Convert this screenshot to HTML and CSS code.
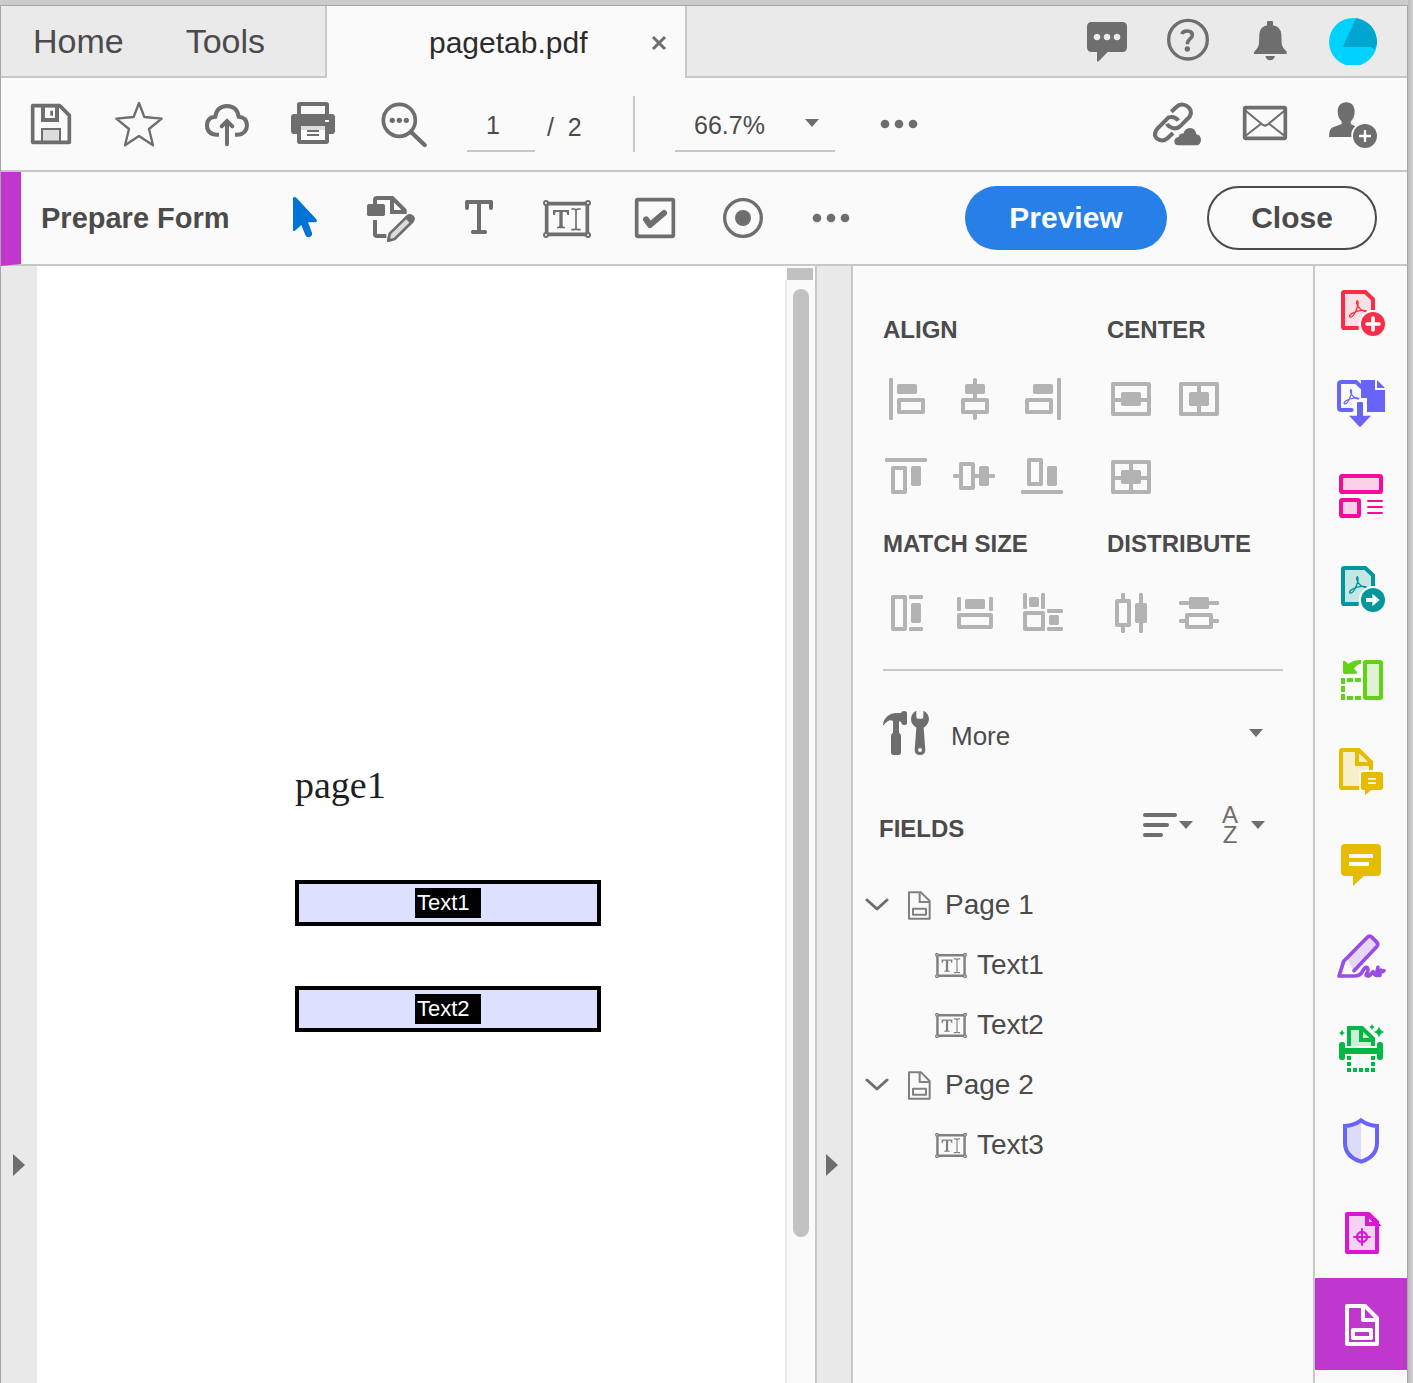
FILE: index.html
```html
<!DOCTYPE html>
<html lang="en">
<head>
<meta charset="utf-8">
<meta name="viewport" content="width=device-width, initial-scale=1">
<title>pagetab.pdf</title>
<link rel="stylesheet" href="styles.css">
</head>
<body>
<div class="window">
  <header class="tabs">
    <nav class="tabs-nav">
      <a href="#home">Home</a>
      <a href="#tools">Tools</a>
    </nav>
    <div class="tab-active">
      <span class="tab-name">pagetab.pdf</span>
      <button class="tab-close" aria-label="Close tab"><svg width="16" height="16" viewBox="0 0 16 16"><path d="M2 2 14 14M14 2 2 14" fill="none" stroke="currentColor" stroke-width="3"/></svg></button>
    </div>
    <div class="tabs-tools">
      <button class="icon" aria-label="Messages"><svg viewBox="549 51 144 144"><path fill="currentColor" fill-rule="evenodd" d="M575 66H667Q681 66 681 80V142Q681 156 667 156H623L597 183Q591 188 591 181V156H575Q561 156 561 142V80Q561 66 575 66ZM591 101a10 10 0 1 0 .1 0ZM621 101a10 10 0 1 0 .1 0ZM651 101a10 10 0 1 0 .1 0Z"/></svg></button>
      <button class="icon" aria-label="Help"><svg viewBox="795 51 144 144"><g fill="none" stroke="currentColor"><circle cx="864" cy="119" r="58" stroke-width="10"/><path stroke-width="11" d="M846 102Q848 93 862 93 877 93 877 106 877 112 868 119 862 124 862 133"/></g><circle cx="862" cy="147" r="8" fill="currentColor"/></svg></button>
      <button class="icon" aria-label="Notifications"><svg viewBox="1041 51 144 144"><path fill="currentColor" d="M1101 66Q1101 63 1104 63H1116Q1119 63 1119 66V76Q1141 80 1144 102L1145 130Q1147 145 1158 152 1161 155 1160 162H1062Q1061 155 1065 152 1075 145 1077 130L1078 102Q1081 80 1101 76ZM1096 168H1125Q1121 181 1110 181 1100 181 1096 168Z"/></svg></button>
      <button class="icon" aria-label="Account"><svg viewBox="1287 51 144 144"><circle cx="1359" cy="126" r="72" fill="#00d2ff"/><path fill="#00a6d0" d="M1368 54Q1424 66 1431 122V132L1423 150 1414 141H1328Z"/></svg></button>
    </div>
  </header>

  <div class="toolbar">
    <button class="icon" aria-label="Save"><svg viewBox="81 300 144 144"><path fill="#dcdcdc" d="M127 387h54v36h-54z"/><path fill="none" stroke="currentColor" stroke-width="11" stroke-linejoin="round" d="M98 317H179L208 346V427H98Z"/><path fill="currentColor" fill-rule="evenodd" d="M123 317H177V366H123ZM135 322V354H165V322ZM151 332h8v15h-8zM123 384H183V426H177V390H129V426H123Z"/></svg></button>
    <button class="icon" aria-label="Star"><svg viewBox="345 300 144 144"><path fill="none" stroke="currentColor" stroke-width="7" stroke-linejoin="round" d="M417 309 433 351 485 356 447 387 459 436 417 408 375 436 387 387 349 356 401 351Z"/></svg></button>
    <button class="icon" aria-label="Upload to cloud"><svg viewBox="609 300 144 144"><g fill="none" stroke="currentColor" stroke-width="12" stroke-linecap="round"><path stroke-linecap="butt" d="M657 404H648Q621 402 621 375 622 351 646 350 650 319 681 318 712 319 716 350 740 352 741 375 740 402 714 404H705"/><path d="M681 433V366M665 379 681 363 697 379"/></g></svg></button>
    <button class="icon" aria-label="Print"><svg viewBox="873 300 144 144"><g fill="currentColor"><path fill-rule="evenodd" d="M899 306H979Q987 306 987 314V342H891V314Q891 306 899 306ZM903 318V342H975V318Z"/><path fill-rule="evenodd" d="M883 342H995Q1005 342 1005 352V392Q1005 402 995 402H987V424Q987 432 979 432H899Q891 432 891 424V402H883Q873 402 873 392V352Q873 342 883 342ZM903 378V420H975V378ZM975 360V366H987V360Z"/></g><path fill="#dcdcdc" d="M903 378h72v12h-72z"/><path d="M921 393H957M921 405H957" stroke="currentColor" stroke-width="6"/></svg></button>
    <button class="icon" aria-label="Search"><svg viewBox="1137 300 144 144"><g fill="none" stroke="currentColor"><circle cx="1198" cy="361" r="48" stroke-width="11"/><path stroke-width="13" d="M1233 396 1274 435" stroke-linecap="round"/></g><g fill="currentColor"><circle cx="1177" cy="361" r="8"/><circle cx="1198" cy="361" r="8"/><circle cx="1219" cy="361" r="8"/></g></svg></button>
    <div class="pager">
      <input class="page-input" type="text" value="1" aria-label="Page number">
      <span class="page-total">/&nbsp; 2</span>
    </div>
    <span class="divider"></span>
    <div class="zoom">
      <select aria-label="Zoom level"><option>66.7%</option></select>
      <svg class="caret" viewBox="0 0 14 8"><path d="M0 0h14L7 8z" fill="currentColor"/></svg>
    </div>
    <button class="icon" aria-label="More tools"><svg viewBox="1425 300 144 144"><g fill="currentColor"><circle cx="1455" cy="372" r="13"/><circle cx="1497" cy="372" r="13"/><circle cx="1539" cy="372" r="13"/></g></svg></button>
    <span class="spring"></span>
    <button class="icon" aria-label="Share link"><svg viewBox="759 300 144 144"><g fill="none" stroke="currentColor" stroke-width="12"><path d="M814 335 829 321Q842 308 859 317 880 330 869 350L840 379Q825 391 809 380 803 376 801 371"/><path d="M835 362Q825 347 806 352L773 385Q758 403 771 416 787 427 801 416L819 399"/></g><path fill="currentColor" d="M835 436Q823 436 823 424 824 412 836 411 838 400 851 400 854 385 870 384 887 385 889 403 903 405 903 421 902 436 888 436Z"/></svg></button>
    <button class="icon" aria-label="Email"><svg viewBox="1023 300 144 144"><g fill="none" stroke="currentColor"><rect x="1034" y="323" width="122" height="92" rx="3" stroke-width="11"/><path stroke-width="6" d="M1037 332 1086 373Q1095 381 1104 373L1153 332M1037 407 1083 371M1153 407 1107 371"/></g></svg></button>
    <button class="icon" aria-label="Add person"><svg viewBox="1287 300 144 144"><path fill="currentColor" d="M1339 307C1355 307 1364 318 1364 335 1364 349 1358 358 1352 365V372L1366 379Q1352 390 1354 411H1287Q1287 386 1299 382L1325 372V365C1319 358 1313 349 1313 335 1313 318 1322 307 1339 307Z"/><circle cx="1395" cy="408" r="36" fill="currentColor"/><path d="M1395 390V426M1377 408H1413" stroke="#fff" stroke-width="7"/></svg></button>
  </div>

  <div class="toolbar toolbar-form">
    <h1 class="tool-title">Prepare Form</h1>
    <button class="icon selected" aria-label="Select"><svg viewBox="837 582 144 144"><path fill="currentColor" d="M879 594Q882 588 889 593L949 658Q954 667 945 667H924L936 698Q938 707 929 711 920 714 916 705L904 675 885 692Q879 696 879 689Z"/></svg></button>
    <button class="icon" aria-label="Edit form"><svg viewBox="1101 582 144 144"><g fill="none" stroke="currentColor" stroke-width="12"><path d="M1125 612V600Q1125 594 1131 594H1177L1214 631V636H1176V600M1125 660V703Q1125 708 1131 708H1159"/></g><rect x="1101" y="612" width="54" height="36" rx="5" fill="currentColor"/><path fill="#dcdcdc" stroke="currentColor" stroke-width="8" stroke-linejoin="round" d="M1165 722 1169 701 1221 650Q1230 643 1238 650 1244 657 1236 666L1184 717Z"/><path fill="currentColor" d="M1221 650Q1230 643 1238 650 1244 657 1236 666L1231 671 1216 655ZM1163 708 1178 722 1162 725Z"/></svg></button>
    <button class="icon" aria-label="Add text"><svg viewBox="165 582 144 144"><path fill="currentColor" d="M200 600H274Q279 600 279 605V625Q279 630 273 630 267 630 267 625V612H243V690H257Q261 690 261 696 261 702 257 702H217Q213 702 213 696 213 690 217 690H231V612H207V625Q207 630 201 630 195 630 195 625V605Q195 600 200 600Z"/></svg></button>
    <button class="icon" aria-label="Text field"><svg viewBox="429 582 144 144"><use href="#textfield"/></svg></button>
    <button class="icon" aria-label="Check box"><svg viewBox="693 582 144 144"><g fill="none" stroke="currentColor"><rect x="710" y="599" width="110" height="110" rx="4" stroke-width="11"/><path stroke-width="18" stroke-linecap="round" stroke-linejoin="round" d="M738 658 750 675 792 639"/></g></svg></button>
    <button class="icon" aria-label="Radio button"><svg viewBox="957 582 144 144"><circle cx="1029" cy="654" r="55" fill="none" stroke="currentColor" stroke-width="10"/><circle cx="1029" cy="654" r="24" fill="currentColor"/></svg></button>
    <button class="icon" aria-label="More fields"><svg viewBox="1221 582 144 144"><g fill="currentColor"><circle cx="1251" cy="654" r="13"/><circle cx="1293" cy="654" r="13"/><circle cx="1335" cy="654" r="13"/></g></svg></button>
    <span class="spring"></span>
    <button class="pill pill-primary">Preview</button>
    <button class="pill pill-outline">Close</button>
  </div>

  <main class="work">
    <button class="strip" aria-label="Show left panel"><svg viewBox="0 0 12 22"><path d="M0 0 12 11 0 22z" fill="currentColor"/></svg></button>
    <section class="document">
      <p class="doc-text">page1</p>
      <button class="field"><span>Text1</span></button>
      <button class="field"><span>Text2</span></button>
    </section>
    <div class="scroll">
      <span class="scroll-cap"></span>
      <div class="scroll-track"><span class="scroll-thumb"></span></div>
    </div>
    <button class="strip strip-right" aria-label="Hide right panel"><svg viewBox="0 0 12 22"><path d="M0 0 12 11 0 22z" fill="currentColor"/></svg></button>

    <aside class="panel">
      <div class="groups">
        <section>
          <h2>ALIGN</h2>
          <div class="group-icons three">
            <button class="icon" aria-label="Align left"><svg viewBox="69 225 144 144"><g fill="currentColor"><rect x="87" y="234" width="12" height="126" rx="4"/><rect x="111" y="252" width="60" height="30" rx="5"/></g><rect class="o" x="117" y="300" width="72" height="36"/></svg></button>
            <button class="icon" aria-label="Align vertical centers"><svg viewBox="273 225 144 144"><g fill="currentColor"><path d="M339 237q6-6 12 0V300h-12zM339 336h12v21q-6 6-12 0z"/><rect x="315" y="252" width="60" height="30" rx="5"/></g><rect class="o" x="309" y="300" width="72" height="36"/></svg></button>
            <button class="icon" aria-label="Align right"><svg viewBox="477 225 144 144"><g fill="currentColor"><rect x="591" y="234" width="12" height="126" rx="4"/><rect x="519" y="252" width="60" height="30" rx="5"/></g><rect class="o" x="501" y="300" width="72" height="36"/></svg></button>
            <button class="icon" aria-label="Align top"><svg viewBox="69 459 144 144"><g fill="currentColor"><rect x="75" y="474" width="126" height="12" rx="4"/><rect x="153" y="498" width="30" height="60" rx="5"/></g><rect class="o" x="99" y="504" width="36" height="72"/></svg></button>
            <button class="icon" aria-label="Align horizontal centers"><svg viewBox="273 459 144 144"><g fill="currentColor"><rect x="279" y="522" width="20" height="12" rx="4"/><rect x="342" y="522" width="63" height="12" rx="4"/><rect x="357" y="498" width="30" height="60" rx="5"/></g><rect class="o" x="303" y="492" width="36" height="72"/></svg></button>
            <button class="icon" aria-label="Align bottom"><svg viewBox="477 459 144 144"><g fill="currentColor"><rect x="483" y="570" width="126" height="12" rx="4"/><rect x="561" y="498" width="30" height="60" rx="5"/></g><rect class="o" x="507" y="480" width="36" height="72"/></svg></button>
          </div>
        </section>
        <section>
          <h2>CENTER</h2>
          <div class="group-icons two">
            <button class="icon" aria-label="Center vertically"><svg viewBox="741 225 144 144"><rect class="o" x="759" y="252" width="108" height="90"/><path fill="currentColor" d="M762 294h102v12H762z"/><rect x="783" y="276" width="60" height="42" rx="5" fill="currentColor"/></svg></button>
            <button class="icon" aria-label="Center horizontally"><svg viewBox="945 225 144 144"><rect class="o" x="963" y="252" width="108" height="90"/><path fill="currentColor" d="M1011 255h12v84h-12z"/><rect x="987" y="276" width="60" height="42" rx="5" fill="currentColor"/></svg></button>
            <button class="icon" aria-label="Center both"><svg viewBox="741 459 144 144"><rect class="o" x="759" y="486" width="108" height="90"/><path fill="currentColor" d="M762 528h102v12H762zM807 489h12v84h-12z"/><rect x="783" y="510" width="60" height="42" rx="5" fill="currentColor"/></svg></button>
          </div>
        </section>
        <section>
          <h2>MATCH SIZE</h2>
          <div class="group-icons three">
            <button class="icon" aria-label="Match height"><svg viewBox="69 204 144 144"><rect class="o" x="99" y="228" width="36" height="96"/><g fill="currentColor"><rect x="147" y="222" width="42" height="12" rx="4"/><rect x="147" y="318" width="42" height="12" rx="4"/><rect x="153" y="246" width="30" height="60" rx="5"/></g></svg></button>
            <button class="icon" aria-label="Match width"><svg viewBox="273 204 144 144"><rect class="o" x="297" y="282" width="96" height="36"/><g fill="currentColor"><rect x="291" y="228" width="12" height="42" rx="4"/><rect x="387" y="228" width="12" height="42" rx="4"/><rect x="315" y="234" width="60" height="30" rx="5"/></g></svg></button>
            <button class="icon" aria-label="Match both"><svg viewBox="477 204 144 144"><rect class="o" x="495" y="276" width="54" height="48"/><g fill="currentColor"><rect x="489" y="216" width="12" height="48" rx="4"/><rect x="543" y="216" width="12" height="48" rx="4"/><rect x="507" y="228" width="30" height="30" rx="5"/><rect x="561" y="264" width="48" height="12" rx="4"/><rect x="561" y="318" width="48" height="12" rx="4"/><rect x="567" y="282" width="30" height="30" rx="5"/></g></svg></button>
          </div>
        </section>
        <section>
          <h2>DISTRIBUTE</h2>
          <div class="group-icons two">
            <button class="icon" aria-label="Distribute horizontally"><svg viewBox="741 204 144 144"><rect class="o" x="771" y="240" width="36" height="72"/><g fill="currentColor"><rect x="783" y="216" width="12" height="24" rx="4"/><rect x="783" y="312" width="12" height="24" rx="4"/><rect x="837" y="216" width="12" height="120" rx="4"/><rect x="825" y="246" width="36" height="60" rx="5"/></g></svg></button>
            <button class="icon" aria-label="Distribute vertically"><svg viewBox="945 204 144 144"><rect class="o" x="981" y="282" width="72" height="36"/><g fill="currentColor"><rect x="957" y="240" width="120" height="12" rx="4"/><rect x="987" y="228" width="60" height="36" rx="5"/><rect x="957" y="294" width="24" height="12" rx="4"/><rect x="1053" y="294" width="24" height="12" rx="4"/></g></svg></button>
          </div>
        </section>
      </div>

      <button class="more">
        <svg class="more-icon" viewBox="69 564 144 144"><g fill="currentColor"><path d="M69 611Q70 595 84 584 94 576 106 576H123Q125 570 132 570 141 570 141 576V606Q141 612 132 612 125 612 123 603L117 600V635Q123 637 123 645V694Q123 702 115 702H101Q93 702 93 694V645Q93 637 99 635V600Q88 592 69 614Z"/><path fill-rule="evenodd" d="M169 569V588Q169 593 174 593H185Q190 593 190 588V569Q207 577 207 594 206 610 191 620L196 686Q196 702 180 702 164 702 164 686L169 620Q153 610 153 594 153 577 169 569ZM180 681a6 6 0 1 0 .1 0Z"/></g></svg>
        <span>More</span>
        <svg class="caret" viewBox="0 0 14 8"><path d="M0 0h14L7 8z" fill="currentColor"/></svg>
      </button>

      <div class="fields-head">
        <h2>FIELDS</h2>
        <button class="sort" aria-label="Order fields"><svg class="lines" viewBox="0 0 34 24"><path d="M2 2H32M2 12H24M2 22H18" stroke="currentColor" stroke-width="4" stroke-linecap="round"/></svg><svg class="caret" viewBox="0 0 14 8"><path d="M0 0h14L7 8z" fill="currentColor"/></svg></button>
        <button class="sort sort-az"><span class="az"><span>A</span><span>Z</span></span><svg class="caret" viewBox="0 0 14 8"><path d="M0 0h14L7 8z" fill="currentColor"/></svg></button>
      </div>

      <ul class="tree">
        <li class="tree-page"><svg class="chev" viewBox="0 0 24 14"><path d="M2 2 12 11 22 2" fill="none" stroke="currentColor" stroke-width="3" stroke-linecap="round" stroke-linejoin="round"/></svg><svg class="page-icon" viewBox="171 321 72 93"><use href="#pageform"/></svg><span>Page 1</span></li>
        <li class="tree-field"><svg class="field-icon" viewBox="429 597 144 120"><use href="#textfield"/></svg><span>Text1</span></li>
        <li class="tree-field"><svg class="field-icon" viewBox="429 597 144 120"><use href="#textfield"/></svg><span>Text2</span></li>
        <li class="tree-page"><svg class="chev" viewBox="0 0 24 14"><path d="M2 2 12 11 22 2" fill="none" stroke="currentColor" stroke-width="3" stroke-linecap="round" stroke-linejoin="round"/></svg><svg class="page-icon" viewBox="171 321 72 93"><use href="#pageform"/></svg><span>Page 2</span></li>
        <li class="tree-field"><svg class="field-icon" viewBox="429 597 144 120"><use href="#textfield"/></svg><span>Text3</span></li>
      </ul>
    </aside>

    <nav class="rail" aria-label="Tools">
      <button aria-label="Create PDF" class="red"><svg viewBox="45 -12 276 276"><path d="M133 66H196L219 86V130Q184 132 182 174H133Q129 174 129 170V70Q129 66 133 66Z" fill="#fde0e3"/><path d="M219 122V88L196 66H133Q129 66 129 70V170Q129 174 133 174H176" fill="none" stroke="currentColor" stroke-width="12"/><use href="#acro"/><circle cx="219" cy="162" r="42" fill="#fafafa"/><circle cx="219" cy="162" r="36" fill="currentColor"/><path d="M219 144V180M201 162H237" stroke="#fff" stroke-width="11" stroke-linecap="round"/></svg></button>
      <button aria-label="Combine files" class="violet"><svg viewBox="45 264 276 276"><path d="M155 420H124Q117 420 117 413V343Q117 336 124 336H168L188 354" fill="none" stroke="currentColor" stroke-width="12" stroke-linecap="round"/><path fill="currentColor" d="M183 330H225V360H255V426H201V384H183ZM231 330 255 354H231ZM174 396H186Q189 396 189 400V437H213L183 469Q180 473 177 469L147 437H171V400Q171 396 174 396Z"/><g transform="translate(-3 281) scale(.88)"><use href="#acro" transform="translate(5 -4)"/></g></svg></button>
      <button aria-label="Organize pages" class="pink"><svg viewBox="45 540 276 276"><g fill="#fbd0e8" stroke="currentColor" stroke-width="12"><rect x="123" y="618" width="120" height="48" rx="4"/><rect x="123" y="690" width="54" height="48" rx="4"/></g><path d="M204 693H246M204 711H246M204 729H246" stroke="currentColor" stroke-width="6" stroke-linecap="round"/></svg></button>
      <button aria-label="Export PDF" class="teal"><svg viewBox="45 816 276 276"><path d="M133 894H196L219 914V960Q184 962 182 1002H133Q129 1002 129 998V898Q129 894 133 894Z" fill="#c6e6e6"/><path d="M219 950V916L196 894H133Q129 894 129 898V998Q129 1002 133 1002H176" fill="none" stroke="currentColor" stroke-width="12"/><g transform="translate(0 828)"><use href="#acro"/></g><circle cx="219" cy="990" r="42" fill="#fafafa"/><circle cx="219" cy="990" r="36" fill="currentColor"/><path d="M198 984H217V971L239 990 217 1009V996H198Z" fill="#fff"/></svg></button>
      <button aria-label="Rotate pages" class="lime"><svg viewBox="45 12 276 276"><rect x="195" y="96" width="48" height="108" rx="3" fill="#e0f2d4" stroke="currentColor" stroke-width="12"/><path fill="currentColor" d="M183 90V101Q169 103 162 117L172 127Q173 131 168 131L133 132Q129 131 129 127V94Q132 90 136 94L145 102Q160 90 183 90Z"/><path fill="none" stroke="currentColor" stroke-width="12" d="M123 150H135M141 150H159M165 150H183M129 144V162M129 168V186M129 192V210M135 204H135M141 204H159M165 204H183"/></svg></button>
      <button aria-label="Comment on page" class="gold"><svg viewBox="45 288 276 276"><path d="M123 360H174L213 398V420H178V474H123Z" fill="#f6efca"/><path d="M177 474H127Q123 474 123 470V364Q123 360 127 360H176L213 396V420M171 360V402H213" fill="none" stroke="currentColor" stroke-width="12"/><path fill="currentColor" fill-rule="evenodd" d="M190 426H242Q249 426 249 433V473Q249 480 242 480H214L195 496V480H190Q183 480 183 473V433Q183 426 190 426ZM204 444V449H228V444ZM204 457V462H228V457Z"/></svg></button>
      <button aria-label="Comment" class="gold"><svg viewBox="45 564 276 276"><path fill="currentColor" fill-rule="evenodd" d="M135 642H231Q243 642 243 654V726Q243 738 231 738H192L159 768V738H135Q123 738 123 726V654Q123 642 135 642ZM147 672V684H219V672ZM147 696V708H207V696Z"/></svg></button>
      <button aria-label="Fill and sign" class="purple"><svg viewBox="45 840 276 276"><path fill="#e6d6f7" d="M142 986 205 920 230 941 160 1022Z"/><path d="M117 1038 131 994 202 922Q209 915 216 922L231 937Q236 943 230 950L162 1022M117 1038H165Q182 1037 188 1023 196 1010 202 1013 207 1019 199 1033 197 1039 208 1037L219 1025Q223 1037 234 1036 241 1033 243 1020 246 1029 252 1022M234 1012Q226 1035 240 1036" fill="none" stroke="currentColor" stroke-width="11" stroke-linejoin="round" stroke-linecap="round"/></svg></button>
      <button aria-label="Scan and OCR" class="green"><svg viewBox="45 36 276 276"><path d="M147 168V114H184L219 148V168Z" fill="#cdeed8"/><path d="M147 168V114H186L219 146V168M183 114V150H219" fill="none" stroke="currentColor" stroke-width="12"/><path fill="currentColor" d="M125 156H129Q135 156 135 162V174H231V162Q231 156 237 156H241Q249 156 249 164V202Q249 210 241 210H237Q231 210 231 204V192H135V204Q135 210 129 210H125Q117 210 117 202V164Q117 156 125 156ZM237 108Q239 123 254 126 239 129 237 144 235 129 220 126 235 123 237 108ZM216 102 219 108 225 111 219 114 216 120 213 114 207 111 213 108ZM126 119 129 126 135 129 129 132 126 138 122 132 117 129 122 126Z"/><path stroke="currentColor" stroke-width="12" stroke-dasharray="12 6" fill="none" d="M147 198V246M219 198V246M159 240H213"/></svg></button>
      <button aria-label="Protect" class="violet"><svg viewBox="45 312 276 276"><path fill="#dcdcfa" d="M183 391V515Q135 500 135 460V408Q165 407 183 391Z"/><path fill="none" stroke="currentColor" stroke-width="12" d="M183 391Q205 407 231 408V460Q230 500 183 515 136 500 135 460V408Q161 407 183 391Z"/></svg></button>
      <button aria-label="Optimize PDF" class="magenta"><svg viewBox="45 588 276 276"><path fill="#f6d2f5" stroke="currentColor" stroke-width="12" stroke-linejoin="round" d="M141 672H206L231 696V786H141Z"/><path fill="#fafafa" stroke="currentColor" stroke-width="12" d="M201 672V702H231L204 674"/><g fill="none" stroke="currentColor"><circle cx="186" cy="741" r="15" stroke-width="7"/><path stroke-width="6" d="M186 715V767M160 741H212"/></g></svg></button>
      <button aria-label="Prepare form" class="active"><svg viewBox="45 864 276 276"><g fill="none" stroke="currentColor" stroke-width="12" stroke-linejoin="round"><path d="M141 948H195L231 984V1062H141Z"/><path d="M189 948V990H231M159 1020H213V1044H159Z"/></g></svg></button>
    </nav>
  </main>
</div>

<div class="backdrop" aria-hidden="true"></div>

<svg class="defs" width="0" height="0" aria-hidden="true">
  <defs>
    <g id="textfield">
      <path fill="none" stroke="currentColor" stroke-width="11" d="M440 611H562V703H440Z"/>
      <g fill="#fafafa" stroke="currentColor" stroke-width="6"><circle cx="438" cy="609" r="6"/><circle cx="564" cy="609" r="6"/><circle cx="438" cy="705" r="6"/><circle cx="564" cy="705" r="6"/></g>
      <path fill="currentColor" d="M459 630H507V645H502L499 636H488V679L495 681V685H471V681L478 679V636H467L464 645H459Z"/>
      <path fill="none" stroke="currentColor" stroke-width="5" d="M514 627H522Q528 627 528 632 528 627 534 627H542M528 630V685M514 689H522Q528 689 528 684 528 689 534 689H542"/>
    </g>
    <g id="pageform" fill="none" stroke="currentColor" stroke-width="6" stroke-linejoin="round">
      <path d="M177 328H213L239 354V407H177Z"/><path d="M209 328V357H239M189 377H228V395H189Z"/>
    </g>
    <path id="acro" fill="none" stroke="currentColor" stroke-width="4" d="M172 92C166 99 175 112 181 117 188 123 197 126 199 123 197 119 175 121 162 127 152 131 146 138 150 141 156 143 164 131 169 119 174 107 177 96 172 92Z"/>
  </defs>
</svg>
</body>
</html>
```

FILE: styles.css
```css
* {
  box-sizing: border-box;
}

body {
  margin: 0;
  min-height: 100vh;
  display: flex;
  overflow: hidden;
  background: #cbcbcb;
  color: #4b4b4b;
  font-family: "Liberation Sans", Arial, sans-serif;
}

button,
input,
select {
  margin: 0;
  padding: 0;
  border: 0;
  background: none;
  color: inherit;
  font: inherit;
}

svg {
  display: block;
  flex: none;
}

h1,
h2,
p,
ul {
  margin: 0;
  padding: 0;
  list-style: none;
}

h2 {
  font-size: 24px;
  line-height: 28px;
}

.defs {
  position: absolute;
}

.window {
  flex: 1;
  min-width: 0;
  margin-top: 5px;
  border: 1px solid #a6a6a6;
  border-bottom: 0;
  background: #fafafa;
  display: flex;
  flex-direction: column;
}

.backdrop {
  flex: none;
  width: 5px;
  background: linear-gradient(90deg, #bcbcbc, #d0d0d0);
}

.icon {
  flex: none;
  width: 48px;
  height: 48px;
  color: #6e6e6e;
}

.icon svg {
  width: 48px;
  height: 48px;
}

.caret {
  width: 14px;
  height: 8px;
  color: #6e6e6e;
}

.spring {
  flex: 1;
}

/* Tab strip */

.tabs {
  display: flex;
  height: 72px;
  background: #eaeaea;
}

.tabs-nav {
  display: flex;
  gap: 62px;
  width: 326px;
  padding-left: 32px;
  border-right: 2px solid #c8c8c8;
  border-bottom: 2px solid #c8c8c8;
  font-size: 34px;
  line-height: 70px;
}

.tabs-nav a {
  color: inherit;
  text-decoration: none;
}

.tab-active {
  display: flex;
  align-items: center;
  justify-content: space-between;
  width: 358px;
  padding: 2px 18px 0 102px;
  background: #fafafa;
  color: #2c2c2c;
  font-size: 30px;
}

.tab-close {
  width: 16px;
  height: 16px;
  color: #6e6e6e;
}

.tabs-tools {
  flex: 1;
  display: flex;
  align-items: center;
  justify-content: flex-end;
  gap: 34px;
  padding-right: 30px;
  border-left: 2px solid #c8c8c8;
  border-bottom: 2px solid #c8c8c8;
}

/* Toolbars */

.toolbar {
  display: flex;
  align-items: center;
  gap: 40px;
  height: 94px;
  padding: 0 30px 0 26px;
  border-bottom: 2px solid #c8c8c8;
}

.pager {
  display: flex;
  align-items: center;
  gap: 12px;
  width: 126px;
  font-size: 25px;
}

.page-input {
  width: 68px;
  height: 56px;
  padding: 4px 16px 0 0;
  border-bottom: 2px solid #c8c8c8;
  text-align: center;
}

.page-total {
  padding-top: 6px;
}

.divider {
  width: 2px;
  height: 56px;
  background: #c8c8c8;
}

.zoom {
  display: flex;
  align-items: center;
  width: 160px;
  height: 56px;
  padding: 0 16px 0 19px;
  border-bottom: 2px solid #c8c8c8;
  font-size: 25px;
}

.zoom select {
  flex: 1;
  height: 54px;
  padding-top: 4px;
  appearance: none;
}

.toolbar-form {
  padding-left: 20px;
  border-left: 20px solid #c037ce;
}

.tool-title {
  width: 198px;
  font-size: 29px;
  line-height: 36px;
  white-space: nowrap;
}

.selected {
  color: #0074d4;
}

.pill {
  height: 64px;
  border-radius: 32px;
  font-size: 30px;
  font-weight: bold;
}

.pill-primary {
  width: 202px;
  background: #2680e8;
  color: #fff;
}

.pill-outline {
  width: 170px;
  border: 2px solid #4b4b4b;
}

/* Work area */

.work {
  flex: 1;
  display: flex;
  min-height: 1117px;
}

.strip {
  display: flex;
  flex: none;
  justify-content: center;
  width: 36px;
  padding-top: 888px;
  background: #e9e9e9;
  color: #6e6e6e;
}

.strip svg {
  width: 12px;
  height: 22px;
}

.strip-right {
  width: 38px;
  padding-right: 4px;
  border-left: 2px solid #c8c8c8;
  border-right: 2px solid #c8c8c8;
}

.document {
  flex: 1;
  display: flex;
  flex-direction: column;
  align-items: flex-start;
  gap: 60px;
  padding: 496px 0 0 258px;
  background: #fff;
}

.doc-text {
  padding-bottom: 12px;
  color: #1e1e1e;
  font-family: "Liberation Serif", "Times New Roman", serif;
  font-size: 38px;
  line-height: 46px;
}

.field {
  display: flex;
  align-items: center;
  justify-content: center;
  width: 306px;
  height: 46px;
  border: 4px solid #000;
  background: #dde1ff;
  color: #fff;
  font-size: 22px;
  line-height: 30px;
}

.field span {
  width: 66px;
  padding-left: 2px;
  background: #000;
  text-align: left;
}

.scroll {
  display: flex;
  flex-direction: column;
  width: 30px;
  padding-top: 2px;
}

.scroll-cap {
  width: 26px;
  height: 12px;
  margin: 0 2px;
  background: #c0c0c0;
}

.scroll-track {
  flex: 1;
  padding: 9px 6px 0;
  border-left: 2px solid #e9e9e9;
}

.scroll-thumb {
  display: block;
  width: 16px;
  height: 948px;
  border-radius: 8px;
  background: #c2c2c2;
}

/* Form panel */

.panel {
  flex: none;
  width: 460px;
  padding: 50px 30px 0;
}

.groups {
  display: grid;
  grid-template-columns: 224px 1fr;
  row-gap: 29px;
  padding-bottom: 32px;
  border-bottom: 2px solid #c8c8c8;
}

.group-icons {
  display: grid;
  gap: 30px 20px;
  padding-top: 31px;
}

.three {
  grid-template-columns: repeat(3, 48px);
}

.two {
  grid-template-columns: repeat(2, 48px);
}

.group-icons .icon {
  color: #b3b3b3;
}

.o {
  fill: none;
  stroke: currentColor;
  stroke-width: 12px;
  stroke-linejoin: round;
}

.more {
  display: flex;
  align-items: center;
  width: 100%;
  height: 48px;
  margin-top: 38px;
  padding-right: 20px;
  font-size: 26px;
}

.more span {
  flex: 1;
  padding: 6px 0 0 20px;
  text-align: left;
}

.more-icon {
  width: 48px;
  height: 48px;
  color: #6e6e6e;
}

.fields-head {
  display: flex;
  align-items: center;
  height: 40px;
  margin: 48px 18px 0 -4px;
}

.fields-head h2 {
  flex: 1;
  padding-top: 8px;
}

.sort {
  display: flex;
  align-items: center;
  gap: 2px;
  color: #6e6e6e;
}

.sort-az {
  gap: 12px;
  margin-left: 28px;
}

.lines {
  width: 34px;
  height: 24px;
}

.az {
  display: flex;
  flex-direction: column;
  width: 18px;
  font-size: 24px;
  line-height: 20px;
}

.tree {
  margin: 30px 0 0 -18px;
  font-size: 28px;
}

.tree li {
  display: flex;
  align-items: center;
  height: 60px;
}

.chev {
  width: 24px;
  height: 14px;
  color: #6e6e6e;
}

.page-icon {
  width: 24px;
  height: 31px;
  margin: 0 14px 0 18px;
  color: #808080;
}

.tree-field {
  padding-left: 70px;
}

.field-icon {
  width: 32px;
  height: 27px;
  margin-right: 10px;
  color: #808080;
}

/* Tool rail */

.rail {
  display: flex;
  flex: none;
  flex-direction: column;
  width: 94px;
  border-left: 2px solid #c8c8c8;
}

.rail button {
  height: 92px;
}

.rail svg {
  width: 92px;
  height: 92px;
}

.red { color: #fa2d48; }
.violet { color: #6864fa; }
.pink { color: #f50d9a; }
.teal { color: #00969b; }
.lime { color: #5fd314; }
.gold { color: #e6bb00; }
.purple { color: #9b4ce6; }
.green { color: #00b944; }
.magenta { color: #d816d4; }

.rail .active {
  background: #c037ce;
  color: #fff;
}
```
